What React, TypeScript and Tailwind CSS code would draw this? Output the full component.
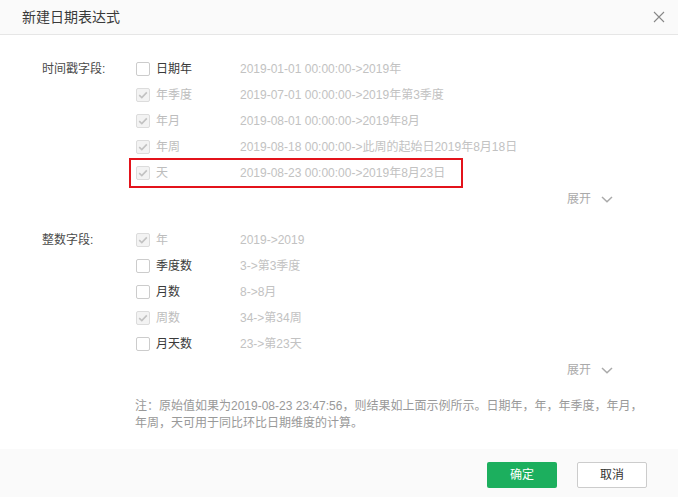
import React from 'react'

type Item = {
  label: string;
  example: string;
  checked: boolean;
  disabled: boolean;
  highlight?: boolean;
}

const timestampItems: Item[] = [
  { label: '日期年', example: '2019-01-01 00:00:00->2019年', checked: false, disabled: false },
  { label: '年季度', example: '2019-07-01 00:00:00->2019年第3季度', checked: true, disabled: true },
  { label: '年月', example: '2019-08-01 00:00:00->2019年8月', checked: true, disabled: true },
  { label: '年周', example: '2019-08-18 00:00:00->此周的起始日2019年8月18日', checked: true, disabled: true },
  { label: '天', example: '2019-08-23 00:00:00->2019年8月23日', checked: true, disabled: true, highlight: true },
]

const integerItems: Item[] = [
  { label: '年', example: '2019->2019', checked: true, disabled: true },
  { label: '季度数', example: '3->第3季度', checked: false, disabled: false },
  { label: '月数', example: '8->8月', checked: false, disabled: false },
  { label: '周数', example: '34->第34周', checked: true, disabled: true },
  { label: '月天数', example: '23->第23天', checked: false, disabled: false },
]

function Checkbox({ checked, disabled }: { checked: boolean; disabled: boolean }) {
  if (disabled) {
    return (
      <span className="flex h-[14px] w-[14px] items-center justify-center rounded-[2px] border border-[#dcdcdc] bg-[#f3f3f3]">
        {checked && (
          <svg width="10" height="8" viewBox="0 0 10 8">
            <path d="M1.2 4.2 L3.8 6.6 L8.8 1.4" fill="none" stroke="#c2c2c2" strokeWidth="1.6" />
          </svg>
        )}
      </span>
    )
  }
  return <span className="h-[14px] w-[14px] rounded-[2px] border border-[#cccccc] bg-white" />
}

function Row({ item }: { item: Item }) {
  return (
    <div className="relative flex h-[26px] items-center">
      <div className="flex w-[104px] items-center gap-[6px]">
        <Checkbox checked={item.checked} disabled={item.disabled} />
        <span className={item.disabled ? 'text-[#bdbdbd]' : 'text-[#3a3a3a]'}>{item.label}</span>
      </div>
      <span className="text-[#c2c2c2]">{item.example}</span>
      {item.highlight && (
        <div className="pointer-events-none absolute -top-[2px] -left-[7px] h-[30px] w-[334px] border-2 border-[#e3131b]" />
      )}
    </div>
  )
}

function Expand() {
  return (
    <div className="flex h-[26px] items-center justify-end gap-[10px] pr-[65px] text-[#aaaaaa]">
      <span>展开</span>
      <svg width="12" height="7" viewBox="0 0 12 7">
        <path d="M1 1 L6 5.8 L11 1" fill="none" stroke="#aaaaaa" strokeWidth="1.5" />
      </svg>
    </div>
  )
}

function Section({ title, items }: { title: string; items: Item[] }) {
  return (
    <div className="flex pl-[42px]">
      <div className="flex h-[26px] w-[94px] items-center text-[#4a4a4a]">{title}</div>
      <div className="flex flex-col">
        {items.map((item, index) => (
          <Row key={index} item={item} />
        ))}
      </div>
    </div>
  )
}

export default function App() {
  return (
    <div
      className="flex h-[497px] w-[678px] flex-col bg-white text-[12px]"
      style={{ fontFamily: '"Liberation Sans", "Noto Sans CJK SC", sans-serif' }}
    >
      {/* Header */}
      <div className="flex h-[35px] shrink-0 items-center justify-between border-b border-[#e6e6e6] bg-[#fafafa] pl-[22px] pr-[13px]">
        <span className="text-[14px] text-[#3a3a3a]">新建日期表达式</span>
        <svg width="12" height="12" viewBox="0 0 12 12">
          <path d="M1 1 L11 11 M11 1 L1 11" stroke="#888888" strokeWidth="1.1" />
        </svg>
      </div>

      {/* Body */}
      <div className="flex flex-1 flex-col pt-[21px]">
        <Section title="时间戳字段:" items={timestampItems} />
        <Expand />
        <div className="mt-[15px]">
          <Section title="整数字段:" items={integerItems} />
        </div>
        <Expand />
        <p className="mt-[15px] pl-[135px] pr-[28px] leading-[17px] text-[#999999]">
          注：原始值如果为2019-08-23 23:47:56，则结果如上面示例所示。日期年，年，年季度，年月，
          <br />
          年周，天可用于同比环比日期维度的计算。
        </p>
      </div>

      {/* Footer */}
      <div className="flex h-[48px] shrink-0 items-start justify-end gap-[20px] bg-[#fafafa] pr-[31px] pt-[13px]">
        <button className="h-[26px] w-[70px] rounded-[2px] bg-[#1caf5e] text-white">确定</button>
        <button className="h-[26px] w-[70px] rounded-[2px] border border-[#cccccc] bg-white text-[#333333]">取消</button>
      </div>
    </div>
  )
}
